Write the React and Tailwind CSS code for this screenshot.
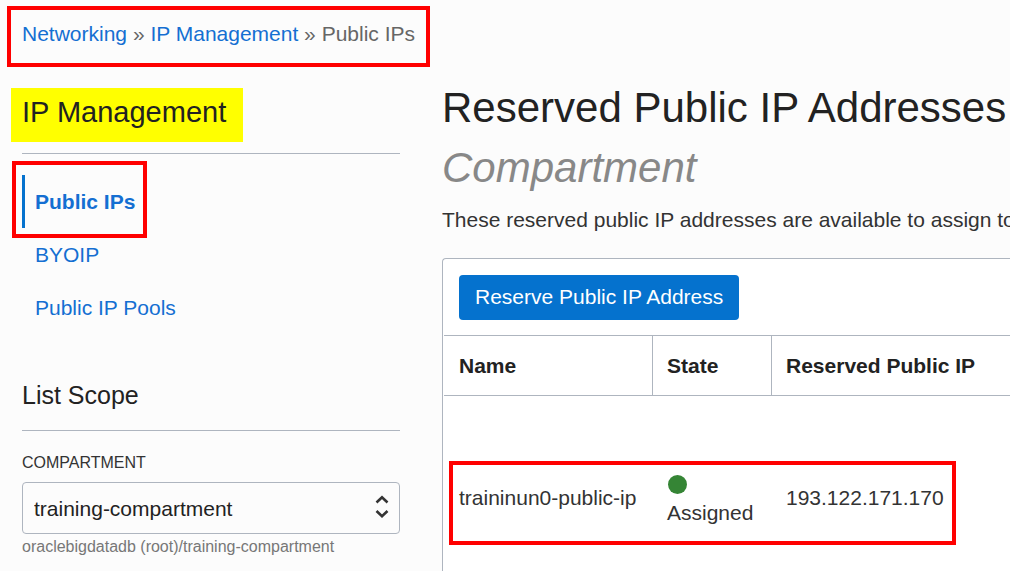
const links = ["BYOIP", "Public IP Pools"];

function Breadcrumb() {
  return (
    <nav
      aria-label="Breadcrumb"
      className="ml-[7px] mt-[6px] w-fit whitespace-nowrap border-4 border-[#ff0000] pb-[15px] pl-[11px] pr-[11px] pt-[10px] leading-7 text-[#666]"
    >
      <a href="#networking" className="text-[#146fd2]">Networking</a>
      {" » "}
      <a href="#ip-management" className="text-[#146fd2]">IP Management</a>
      {" » "}
      <span aria-current="page">Public IPs</span>
    </nav>
  );
}

function Sidebar() {
  return (
    <aside className="w-[378px] shrink-0 pt-[21px]">
      <h2 className="-ml-[11px] w-[232px] bg-[#ffff00] pb-[10px] pl-[11px] pt-1 text-[29px] leading-10 text-[#222]">
        IP Management
      </h2>
      <hr className="mt-[11px] border-[#aeb5bf]" />
      <nav aria-label="IP Management" className="mt-[21px]">
        <ul className="text-[#146fd2]">
          <li className="relative flex h-[53px] items-center border-l-[3px] border-[#0572ce] pl-[10px] font-bold">
            <a href="#public-ips" aria-current="page">Public IPs</a>
            <span className="pointer-events-none absolute -left-[13px] -top-[14px] h-[77px] w-[135px] border-4 border-[#ff0000]" />
          </li>
          {links.map((label) => (
            <li key={label} className="flex h-[53px] items-center pl-[13px]">
              <a href="#section">{label}</a>
            </li>
          ))}
        </ul>
      </nav>
      <section>
        <h3 className="mt-[45px] border-b border-[#aeb5bf] pb-[19px] text-[25px] leading-8">List Scope</h3>
        <label htmlFor="compartment" className="mt-[22px] block text-base leading-5 text-[#333]">
          COMPARTMENT
        </label>
        <div className="relative mt-[9px]">
          <select
            id="compartment"
            className="block h-[52px] w-full appearance-none rounded border border-[#aeb5bf] bg-[#fcfcfc] pb-0 pl-[11px] pr-10 pt-[2px] text-[#222]"
          >
            <option>training-compartment</option>
          </select>
          <svg
            className="pointer-events-none absolute right-[11px] top-[13px]"
            width="14"
            height="24"
            viewBox="0 0 14 24"
            fill="none"
            stroke="#333"
            strokeWidth="2.6"
            aria-hidden="true"
          >
            <path d="M1.5 7.5 L7 2.3 L12.5 7.5 M1.5 16 L7 21.2 L12.5 16" />
          </svg>
        </div>
        <p className="mt-px text-base leading-6 text-[#777]">oraclebigdatadb (root)/training-compartment</p>
      </section>
    </aside>
  );
}

function AddressTable() {
  return (
    <div className="mt-6 rounded-tl border-l border-t border-[#aeb5bf] bg-white pl-px">
      <button type="button" className="mb-[15px] ml-[15px] mt-4 block h-[45px] rounded bg-[#0572ce] px-4 pb-[2px] text-white">
        Reserve Public IP Address
      </button>
      <table className="w-full table-fixed border-separate border-spacing-0 text-left leading-7 text-[#333]">
        <thead>
          <tr className="h-[61px] text-[#222]">
            <th scope="col" className="w-[209px] border-y border-r border-[#aeb5bf] pl-[15px]">Name</th>
            <th scope="col" className="w-[119px] border-y border-r border-[#aeb5bf] pl-[14px]">State</th>
            <th scope="col" className="border-y border-[#aeb5bf] pl-[14px]">Reserved Public IP</th>
          </tr>
        </thead>
        <tbody>
          <tr className="relative whitespace-nowrap">
            <td className="pb-[45px] pl-[15px] pt-[73px]">
              traininun0-public-ip
              <span className="pointer-events-none absolute left-[5px] top-[65px] h-[84px] w-[507px] border-4 border-[#ff0000]" />
            </td>
            <td className="pb-11 pl-[14px] pt-[74px]">
              <div className="pt-[5px]">
                <span className="mb-[5px] ml-px block size-[19px] rounded-full bg-[#358535]" />
                Assigned
              </div>
            </td>
            <td className="pb-[45px] pl-[14px] pt-[73px]">193.122.171.170</td>
          </tr>
        </tbody>
      </table>
    </div>
  );
}

export default function App() {
  return (
    <div className="flow-root min-h-screen overflow-hidden bg-[#fcfcfc] font-['Liberation_Sans',Arial,sans-serif] text-[21px] text-[#222]">
      <Breadcrumb />
      <div className="flex gap-[42px] pl-[22px]">
        <Sidebar />
        <main className="min-w-0 flex-1 overflow-hidden whitespace-nowrap pt-[11px]">
          <h1 className="text-[42px] leading-[60px]">
            Reserved Public IP Addresses
            <span className="block italic text-[#888]">Compartment</span>
          </h1>
          <p className="mt-2 leading-7 text-[#333]">
            These reserved public IP addresses are available to assign to
          </p>
          <AddressTable />
        </main>
      </div>
    </div>
  );
}
